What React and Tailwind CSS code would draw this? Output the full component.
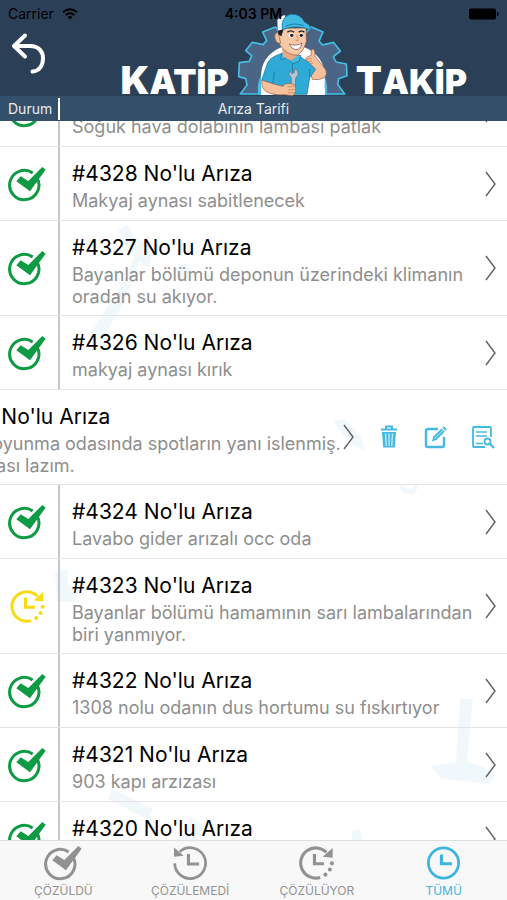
// src/App.jsx
import React, { useState } from 'react';

const FAULTS = [
  { id: 4329, status: 'solved', text: 'Soğuk hava dolabının lambası patlak' },
  { id: 4328, status: 'solved', text: 'Makyaj aynası sabitlenecek' },
  { id: 4327, status: 'solved', text: 'Bayanlar bölümü deponun üzerindeki klimanın oradan su akıyor.' },
  { id: 4326, status: 'solved', text: 'makyaj aynası kırık' },
  { id: 4325, status: 'solved', text: 'Erkek soyunma odasında spotların yanı islenmiş. Onarılması lazım.' },
  { id: 4324, status: 'solved', text: 'Lavabo gider arızalı occ oda' },
  { id: 4323, status: 'progress', text: 'Bayanlar bölümü hamamının sarı lambalarından biri yanmıyor.' },
  { id: 4322, status: 'solved', text: '1308 nolu odanın dus hortumu su fıskırtıyor' },
  { id: 4321, status: 'solved', text: '903 kapı arzızası' },
  { id: 4320, status: 'solved', text: 'Klima çalışmıyor' },
];

const SolvedIcon = ({ className }) => (
  <svg viewBox="22 75 118 108" className={className} fill="none" aria-hidden="true">
    <path d="M98 96A44 44 0 1 0 112 112" stroke="currentColor" strokeWidth="9" />
    <path d="M49 121L62 106L85 120L127 78L137 86L90 151Z" fill="currentColor" />
  </svg>
);

const ProgressIcon = ({ className }) => (
  <svg viewBox="0 0 102 104" className={className} fill="none" aria-hidden="true">
    <path d="M80 21A44 44 0 1 0 62 94" stroke="currentColor" strokeWidth="9" />
    <path d="M98 8V37L69 34Z" fill="currentColor" />
    <path d="M45 26V54H73" stroke="currentColor" strokeWidth="9" />
    <g fill="currentColor">
      <circle cx="96" cy="53" r="6" />
      <circle cx="90" cy="71" r="6" />
      <circle cx="77" cy="86" r="6" />
    </g>
  </svg>
);

const UnsolvedIcon = ({ className }) => (
  <svg viewBox="0 0 102 104" className={className} fill="none" aria-hidden="true">
    <path d="M20 19A45 45 0 1 1 5 53" stroke="currentColor" strokeWidth="8" />
    <path d="M3 7V34L31 31Z" fill="currentColor" />
    <path d="M45 26V55H76" stroke="currentColor" strokeWidth="9" />
  </svg>
);

const AllIcon = ({ className }) => (
  <svg viewBox="0 0 102 104" className={className} fill="none" aria-hidden="true">
    <circle cx="51" cy="52" r="44" stroke="currentColor" strokeWidth="8" />
    <path d="M45 27V54H76" stroke="currentColor" strokeWidth="9" />
  </svg>
);

const Chevron = () => (
  <svg viewBox="0 0 12 26" className="h-[26px] w-3 shrink-0 text-[#5c6068]" fill="none" aria-hidden="true">
    <path d="M1 1L10 13L1 25" stroke="currentColor" strokeWidth="1.4" />
  </svg>
);

const TrashIcon = () => (
  <svg viewBox="0 0 18 24" className="h-6 w-[18px]" fill="none" stroke="currentColor" aria-hidden="true">
    <path d="M1 4.5H17M6 4V1.5H12V4" strokeWidth="2" />
    <path d="M2 7H16L14.8 22.5H3.2Z" fill="currentColor" stroke="none" />
    <path d="M5.6 8.5L6.2 21M9 8.5V21M12.4 8.5L11.8 21" stroke="#fff" strokeWidth="0.9" />
  </svg>
);

const EditIcon = () => (
  <svg viewBox="0 0 24 24" className="h-6 w-6" fill="none" stroke="currentColor" aria-hidden="true">
    <path d="M14 4H4Q2 4 2 6V20Q2 22 4 22H18Q20 22 20 20V12" strokeWidth="2.4" />
    <path d="M8 16.5L9.2 11.8L17.5 3.5L20.8 6.6L12.5 15Z" fill="currentColor" stroke="none" />
    <path d="M18.4 2.6L19.8 1.2L23 4.4L21.6 5.8Z" fill="currentColor" stroke="none" />
    <path d="M10.5 13.8L19 5.2" stroke="#fff" strokeWidth="0.7" />
  </svg>
);

const DetailIcon = () => (
  <svg viewBox="0 0 24 24" className="h-6 w-6" fill="none" stroke="currentColor" aria-hidden="true">
    <path d="M14 22H3Q2 22 2 21V3Q2 2 3 2H19Q20 2 20 3V12" strokeWidth="1.8" />
    <path d="M5 7H16M5 11H16M5 18.500H12" strokeWidth="1.6" />
    <circle cx="16.5" cy="16.5" r="3" strokeWidth="1.8" />
    <path d="M18.8 18.8L23 23" strokeWidth="2.2" />
  </svg>
);

const Mascot = () => (
  <svg viewBox="20 38 333 249" className="-mt-4 h-[83px] w-[111px] shrink-0" aria-hidden="true">
    <path
      d="M30 281L50 254L46 235L25 229L27 187L57 183L64 166L46 151L66 126L98 133L109 121L97 95L135 80L152 98H225L243 80L278 95L266 122L277 134L309 126L330 152L309 169L317 185L348 191L350 226L325 235L322 252L343 281Z"
      fill="#4a6585"
      stroke="#45bfe8"
      strokeWidth="5"
      strokeLinejoin="round"
    />
    <path d="M84 283A104 100 0 1 1 289 283Z" fill="#45bfe8" />
    <path d="M92 283A96 92 0 0 1 284 283Z" fill="#fff" />
    <path d="M92 225A95 90 0 0 1 283 225V283H92Z" fill="#fff" />
    {/* far arm with the thumb up */}
    <path d="M235 196Q222 180 228 172L242 165L243 148Q249 143 253 152L254 168L264 180L286 208Q292 224 280 233Q265 241 246 237Z" fill="#f5c09b" stroke="#8f5b43" strokeWidth="2" />
    <path d="M229 177L244 174M229 185L245 182M233 193L248 188" stroke="#b97857" strokeWidth="2" fill="none" />
    {/* shirt */}
    <path d="M152 160Q120 170 112 187L94 240L128 251L130 282H230L238 232L256 207L236 187L208 168Z" fill="#2fa9d6" stroke="#176c92" strokeWidth="2" />
    <path d="M154 158L152 178L172 171L186 190L205 184L212 166ZM186 190L187 214M132 213L128 251M238 205V232" fill="#43bbe3" stroke="#176c92" strokeWidth="2" />
    {/* head */}
    <path d="M155 145L158 168L182 181L201 166V152Z" fill="#e7a783" />
    <path d="M142 84Q139 112 150 136Q170 164 201 165Q220 154 228 123L227 83Z" fill="#f7c8a5" stroke="#8f5b43" strokeWidth="2" />
    <path d="M143 96Q131 98 134 114Q138 132 151 128Z" fill="#f5c09b" stroke="#8f5b43" strokeWidth="2" />
    <path d="M141 85L145 103L153 108L159 89L170 80Z" fill="#17202c" />
    <path d="M142 91L141 60Q147 48 165 44L161 86Z" fill="#f4f8fb" />
    <path d="M156 88Q150 50 181 42Q210 39 222 65Q238 72 244 85Q235 90 220 82Q185 76 156 88Z" fill="#3fb8e2" stroke="#176c92" strokeWidth="2" />
    <path d="M166 78Q190 65 220 76" fill="none" stroke="#1f82ab" strokeWidth="3" />
    <path d="M171 96Q181 87 191 96M205 96Q214 89 222 96" fill="none" stroke="#17202c" strokeWidth="4" />
    <ellipse cx="183" cy="105" rx="7" ry="7" fill="#fff" />
    <ellipse cx="213" cy="105" rx="6" ry="7" fill="#fff" />
    <circle cx="184" cy="105" r="5" fill="#17202c" />
    <circle cx="213" cy="105" r="5" fill="#17202c" />
    <path d="M199 104L204 120L195 122" fill="none" stroke="#b97857" strokeWidth="2" />
    <path d="M177 131Q198 139 215 128Q211 149 195 148Q183 146 177 131Z" fill="#fff" stroke="#7a3a2c" strokeWidth="2" />
    {/* wrench and near hand */}
    <path d="M182 278L183 232Q173 224 177 211L185 220L193 216L191 205Q205 208 203 224L196 234L194 278Z" fill="#b9c3cd" stroke="#5d6b79" strokeWidth="2" />
    <path d="M94 239Q92 266 110 275Q132 286 162 283L187 286Q200 276 195 256Q187 247 164 251L158 258L127 250Z" fill="#f5c09b" stroke="#8f5b43" strokeWidth="2" />
    <path d="M172 260L195 257M173 269L196 267M173 277L192 277" fill="none" stroke="#b97857" strokeWidth="2" />
  </svg>
);

const LogoWord = ({ first, rest }) => (
  <span className="text-[38px] leading-7 font-black text-white">
    {first}
    <span className="text-[34px]">{rest}</span>
  </span>
);

const StatusBar = () => (
  <div className="grid h-7 grid-cols-3 items-center px-2 text-sm text-black">
    <div className="flex items-center gap-2">
      <span>Carrier</span>
      <svg viewBox="0 0 16 12" className="h-3 w-4" fill="none" stroke="currentColor" strokeWidth="2" aria-hidden="true">
        <path d="M1 4.2Q8 -1.6 15 4.2M3.6 7Q8 3.4 12.4 7" />
        <path d="M5.6 9Q8 7 10.4 9L8 11.6Z" fill="currentColor" stroke="none" />
      </svg>
    </div>
    <span className="z-10 text-center font-semibold">4:03 PM</span>
    <svg viewBox="0 0 30 12" className="h-3 w-[30px] justify-self-end" aria-hidden="true">
      <rect x="0" y="0.5" width="27" height="11" rx="2" />
      <rect x="28" y="4" width="1.5" height="4" rx="0.7" />
    </svg>
  </div>
);

const Header = () => (
  <header className="shrink-0 bg-[#2b3f57]">
    <StatusBar />
    <div className="flex h-[68px] justify-between pr-10 pl-2">
      <button type="button" aria-label="Geri" className="h-12 w-10 text-white">
        <svg viewBox="0 0 40 48" className="h-12 w-10" fill="none" stroke="currentColor" strokeWidth="4" strokeLinecap="round" strokeLinejoin="round" aria-hidden="true">
          <path d="M17 7.5L6 18L17 28.5M7 18H22C32 18 35 25 35 30C35 38 31 43 24.500 43.500" />
        </svg>
      </button>
      <div className="flex items-end gap-2">
        <LogoWord first="K" rest="ATİP" />
        <Mascot />
        <LogoWord first="T" rest="AKİP" />
      </div>
    </div>
    <div className="flex h-[25px] items-center bg-[#34506a] text-sm leading-[22px] text-[#e6ebf0]">
      <span className="w-[60px] border-r-2 border-white pl-2 leading-[22px]">Durum</span>
      <span className="flex-1 text-center leading-[22px]">Arıza Tarifi</span>
      <span className="w-[60px]" />
    </div>
  </header>
);

// Faint tools behind the list
const ToolsBackground = () => (
  <svg viewBox="0 0 507 719" preserveAspectRatio="xMidYMin slice" className="absolute inset-0 -z-10 h-full w-full" fill="#f1f8fb" aria-hidden="true">
    <path d="M118 110L127 103L134 116L144 121L152 133L149 147L139 141L126 178L104 215H89L125 158L135 135L126 124Z" />
    <path d="M175 146Q190 136 188 155L180 164Z" />
    <path d="M333 300L345 298L361 316L365 330L350 322Z" />
    <path d="M398 362L402 371L412 374L419 366L416 362L411 369L404 366Z" />
    <path d="M55 452L68 448V464L78 470L74 481H57Z" />
    <path d="M460 578H473L467 641L484 646L495 655L490 663L462 660L440 657L431 645L456 641Z" />
    <path d="M112 668L153 688L148 699L108 678ZM190 696L204 704L198 719H172L186 714Z" />
    <path d="M352 710L360 708L362 719H352Z" />
  </svg>
);

const RowActions = () => (
  <div className="grid w-[142px] shrink-0 grid-cols-3 items-center justify-items-center text-[#45b9e2]">
    <button type="button" aria-label="Sil"><TrashIcon /></button>
    <button type="button" aria-label="Düzenle"><EditIcon /></button>
    <button type="button" aria-label="Detay"><DetailIcon /></button>
  </div>
);

const FaultRow = ({ fault, swiped }) => (
  <li className="flex overflow-hidden border-b border-[#e2e4e6]">
    <div className={swiped ? 'flex min-h-[73px] w-full shrink-0 -ml-[142px]' : 'flex min-h-[73px] w-full shrink-0'}>
      <div className="flex w-[60px] shrink-0 items-center border-r-2 border-[#c4c6c8] pl-[7px]">
        {fault.status === 'solved' ? (
          <SolvedIcon className="h-9 w-10 text-[#0f9a44]" />
        ) : (
          <ProgressIcon className="ml-[3px] h-[35px] w-[35px] text-[#f7dc13]" />
        )}
      </div>
      <div className="min-w-0 flex-1 pt-3.5 pb-[7px] pl-3">
        <h2 className="mb-[3px] text-[21px] leading-[26px] text-black">#{fault.id} No'lu Arıza</h2>
        <p className="text-lg leading-[22px] text-[#8e8e8e]">{fault.text}</p>
      </div>
      <div className="flex w-[22px] shrink-0 items-center">
        <Chevron />
      </div>
    </div>
    {swiped && <RowActions />}
  </li>
);

const TABS = [
  { key: 'solved', label: 'ÇÖZÜLDÜ', icon: <SolvedIcon className="h-9 w-10" /> },
  { key: 'unsolved', label: 'ÇÖZÜLEMEDİ', icon: <UnsolvedIcon className="h-9 w-[35px]" /> },
  { key: 'progress', label: 'ÇÖZÜLÜYOR', icon: <ProgressIcon className="h-9 w-[35px]" /> },
  { key: 'all', label: 'TÜMÜ', icon: <AllIcon className="h-9 w-[35px]" /> },
];

const TabBar = ({ tab, setTab }) => (
  <nav className="grid h-[60px] shrink-0 grid-cols-4 border-t border-[#dcdfe1] bg-[#f8f8f8]">
    {TABS.map(({ key, label, icon }) => (
      <button
        key={key}
        type="button"
        onClick={() => setTab(key)}
        className={tab === key ? 'flex flex-col items-center pt-1 text-[#3db5e0]' : 'flex flex-col items-center pt-1 text-[#929292]'}
      >
        {icon}
        <span className="mt-0.5 text-xs leading-4">{label}</span>
      </button>
    ))}
  </nav>
);

function App() {
  const [tab, setTab] = useState('all');
  const visible = tab === 'all' ? FAULTS : FAULTS.filter((f) => f.status === tab);

  return (
    <div className="flex h-screen flex-col bg-white font-['Inter',sans-serif]">
      <Header />
      <main className="relative isolate min-h-0 flex-1 overflow-hidden">
        <ToolsBackground />
        <ul className="-mt-12">
          {visible.map((fault) => (
            <FaultRow key={fault.id} fault={fault} swiped={fault.id === 4325} />
          ))}
        </ul>
      </main>
      <TabBar tab={tab} setTab={setTab} />
    </div>
  );
}

export default App;
